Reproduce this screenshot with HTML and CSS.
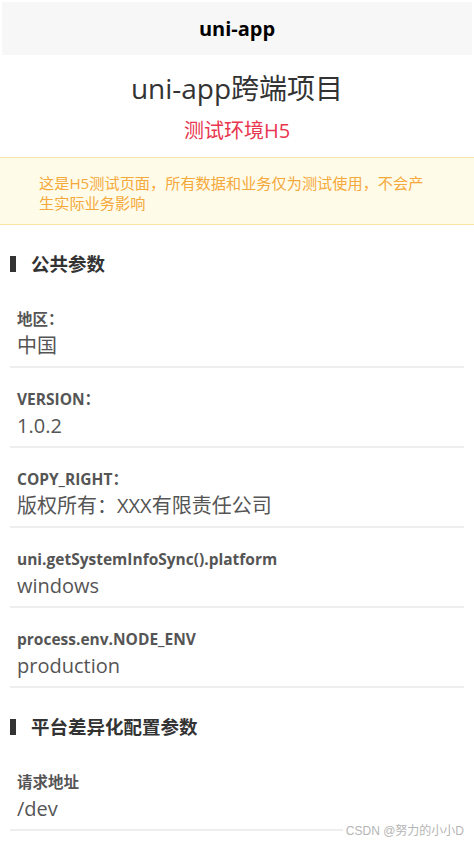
FILE: index.html
```html
<!DOCTYPE html>
<html lang="zh-CN">
<head>
    <meta charset="UTF-8">
    <meta name="viewport" content="width=device-width, initial-scale=1.0">
    <title>uni-app</title>
    <link rel="stylesheet" href="styles.css">
</head>
<body>
    <!-- 导航栏 -->
    <header class="nav-bar">uni-app</header>

    <div class="page">
        <h1 class="title">uni-app跨端项目</h1>
        <p class="env">测试环境H5</p>

        <!-- 提示 -->
        <div class="notice">这是H5测试页面，所有数据和业务仅为测试使用，不会产生实际业务影响</div>

        <!-- 公共参数 -->
        <h2 class="section-title">公共参数</h2>
        <div class="item">
            <div class="label">地区：</div>
            <div class="value">中国</div>
        </div>
        <div class="item">
            <div class="label">VERSION：</div>
            <div class="value">1.0.2</div>
        </div>
        <div class="item">
            <div class="label">COPY_RIGHT：</div>
            <div class="value">版权所有：XXX有限责任公司</div>
        </div>
        <div class="item">
            <div class="label">uni.getSystemInfoSync().platform</div>
            <div class="value">windows</div>
        </div>
        <div class="item">
            <div class="label">process.env.NODE_ENV</div>
            <div class="value">production</div>
        </div>

        <!-- 平台差异化配置参数 -->
        <h2 class="section-title">平台差异化配置参数</h2>
        <div class="item">
            <div class="label">请求地址</div>
            <div class="value">/dev</div>
        </div>
    </div>

    <div class="watermark">CSDN @努力的小小D</div>
</body>
</html>
```

FILE: styles.css
```css
/* 基础 */
body {
    margin: 0;
    font-family: "Open Sans", "Noto Sans CJK SC", sans-serif;
    color: #333;
    background: #fff;
    position: relative;
    min-height: 843px;
}

.nav-bar {
    margin: 2px 2px 0;
    height: 53px;
    line-height: 53px;
    background-color: #f7f7f7;
    text-align: center;
    font-size: 20px;
    font-weight: bold;
    color: #000;
}

.page {
    padding-top: 13px;
}

.title {
    margin: 0;
    font-size: 28px;
    line-height: 40px;
    font-weight: normal;
    text-align: center;
    color: #333;
}

.env {
    margin: 9px 0 0;
    font-size: 20px;
    line-height: 28px;
    text-align: center;
    color: #e8364f;
}

/* 提示框 */
.notice {
    margin-top: 12px;
    padding: 15px 44px 11px 39px;
    background-color: #fffbe9;
    border-top: 1px solid #fbe5a6;
    border-bottom: 1px solid #fbe5a6;
    font-size: 15.2px;
    line-height: 20px;
    color: #f5a93a;
}

/* 分组标题 */
.section-title {
    display: flex;
    align-items: center;
    gap: 15px;
    margin: 0;
    padding: 27px 10px 12px;
    font-size: 18.5px;
    line-height: 24px;
    color: #333;
}

.section-title::before {
    content: "";
    width: 6px;
    height: 16px;
    background-color: #333;
}

/* 参数项 */
.item {
    margin: 0 10px;
    padding: 20px 7px 7px;
    border-bottom: 2px solid #eee;
}

.label {
    font-size: 15.5px;
    line-height: 22px;
    font-weight: bold;
    color: #555;
}

.value {
    margin-top: 3px;
    font-size: 20px;
    line-height: 26px;
    color: #555;
}

.watermark {
    position: absolute;
    right: 10px;
    top: 822px;
    padding-left: 3px;
    background: #fff;
    font-family: "Liberation Sans", "Noto Sans CJK SC", sans-serif;
    font-size: 12px;
    line-height: 18px;
    color: #b5b5b5;
}
```
